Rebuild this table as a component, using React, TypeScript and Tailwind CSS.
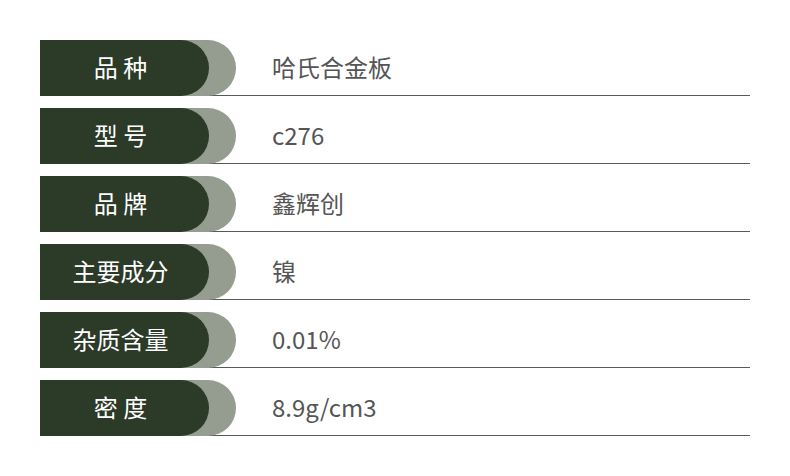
const rows = [
  { label: '品 种', value: '哈氏合金板' },
  { label: '型 号', value: 'c276' },
  { label: '品 牌', value: '鑫辉创' },
  { label: '主要成分', value: '镍' },
  { label: '杂质含量', value: '0.01%' },
  { label: '密 度', value: '8.9g/cm3' },
];

export default function App() {
  return (
    <div
      className="w-[790px] h-[476px] bg-white pt-10 px-10"
      style={{ fontFamily: '"Noto Sans CJK SC", "Noto Sans", sans-serif' }}
    >
      <div className="flex flex-col gap-3 w-[710px]">
        {rows.map((r) => (
          <div key={r.value} className="flex items-center h-[56px] border-b border-[#5a5a5a]">
            <div className="relative self-start w-[196px] h-[56px] shrink-0">
              <div className="absolute left-0 top-0 w-[196px] h-[56px] rounded-r-[28px] bg-[#959c90]" />
              <div className="absolute left-0 top-0 w-[169px] h-[56px] rounded-r-[28px] bg-[#2c3a28] flex items-center justify-center pr-2 pb-[2px]">
                <span className="text-white text-[24px] leading-none whitespace-pre">{r.label}</span>
              </div>
            </div>
            <span className="ml-[36px] pb-[2px] text-[24px] leading-none text-[#555555]">{r.value}</span>
          </div>
        ))}
      </div>
    </div>
  );
}
